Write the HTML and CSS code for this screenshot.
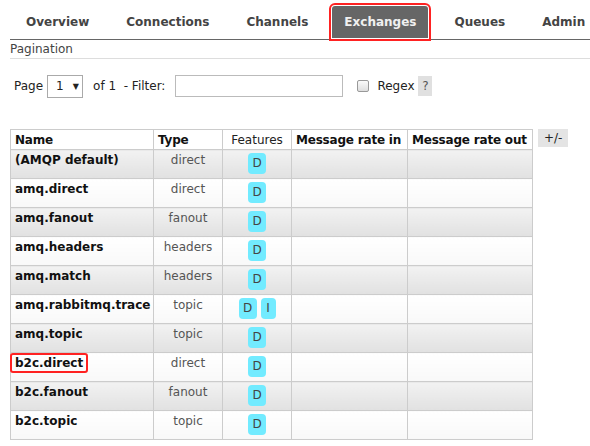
FILE: index.html
```html
<!DOCTYPE html>
<html>
<head>
<meta charset="utf-8">
<link rel="stylesheet" href="styles.css">
</head>
<body>
<div class="page">
  <ul class="tabs">
    <li class="tab">Overview</li>
    <li class="tab">Connections</li>
    <li class="tab">Channels</li>
    <li class="tab active">Exchanges</li>
    <li class="tab">Queues</li>
    <li class="tab">Admin</li>
  </ul>
  <h3 class="section">Pagination</h3>
  <div class="pager">
    <span class="lbl">Page</span>
    <span class="select"><span>1</span><span class="arrow">▼</span></span>
    <span class="lbl of">of 1&nbsp; - Filter:</span>
    <span class="input"></span>
    <span class="check"></span>
    <span class="lbl">Regex</span>
    <span class="help">?</span>
  </div>
  <div class="tablewrap">
    <table class="list">
      <colgroup>
        <col class="c-name">
        <col class="c-type">
        <col class="c-feat">
        <col class="c-in">
        <col class="c-out">
      </colgroup>
      <thead>
        <tr>
          <th>Name</th>
          <th>Type</th>
          <th class="plain">Features</th>
          <th>Message rate in</th>
          <th>Message rate out</th>
        </tr>
      </thead>
      <tbody>
        <tr class="alt1"><td class="name">(AMQP default)</td><td class="type">direct</td><td class="feat"><span class="badge">D</span></td><td></td><td></td></tr>
        <tr class="alt2"><td class="name">amq.direct</td><td class="type">direct</td><td class="feat"><span class="badge">D</span></td><td></td><td></td></tr>
        <tr class="alt1"><td class="name">amq.fanout</td><td class="type">fanout</td><td class="feat"><span class="badge">D</span></td><td></td><td></td></tr>
        <tr class="alt2"><td class="name">amq.headers</td><td class="type">headers</td><td class="feat"><span class="badge">D</span></td><td></td><td></td></tr>
        <tr class="alt1"><td class="name">amq.match</td><td class="type">headers</td><td class="feat"><span class="badge">D</span></td><td></td><td></td></tr>
        <tr class="alt2"><td class="name">amq.rabbitmq.trace</td><td class="type">topic</td><td class="feat"><span class="badge">D</span><span class="badge narrow">I</span></td><td></td><td></td></tr>
        <tr class="alt1"><td class="name">amq.topic</td><td class="type">topic</td><td class="feat"><span class="badge">D</span></td><td></td><td></td></tr>
        <tr class="alt2"><td class="name"><span class="mark">b2c.direct</span></td><td class="type">direct</td><td class="feat"><span class="badge">D</span></td><td></td><td></td></tr>
        <tr class="alt1"><td class="name">b2c.fanout</td><td class="type">fanout</td><td class="feat"><span class="badge">D</span></td><td></td><td></td></tr>
        <tr class="alt2"><td class="name">b2c.topic</td><td class="type">topic</td><td class="feat"><span class="badge">D</span></td><td></td><td></td></tr>
      </tbody>
    </table>
    <span class="toggle">+/-</span>
  </div>
</div>
</body>
</html>
```
FILE: styles.css
```css
html, body {
  margin: 0;
  padding: 0;
  background: #fff;
}
body {
  font-family: "DejaVu Sans", Verdana, sans-serif;
  font-size: 12px;
  color: #333;
  overflow: hidden;
}
.page {
  padding-left: 10px;
}
.tabs {
  list-style: none;
  margin: 0;
  padding: 6px 0 0 2px;
  display: flex;
  border-bottom: 1px solid #666;
  height: 33px;
}
.tab {
  height: 33px;
  line-height: 33px;
  padding: 0 14px;
  margin-right: 9px;
  font-weight: bold;
  color: #444;
  white-space: nowrap;
}
.tab.active {
  background: #666;
  color: #f0f0f0;
  border-radius: 3px 3px 0 0;
  height: 32px;
  line-height: 32px;
  padding: 0 12px;
  margin-left: 1px;
  margin-right: 12px;
  outline: 2px solid #f22;
  outline-offset: 1px;
}
.section {
  margin: 0;
  font-size: 12px;
  font-weight: normal;
  color: #444;
  line-height: 18px;
  height: 18px;
  border-bottom: 1px solid #ddd;
}
.pager {
  display: flex;
  align-items: center;
  height: 24px;
  margin-top: 15px;
  padding-left: 4px;
  color: #222;
}
.lbl {
  white-space: nowrap;
}
.select {
  display: flex;
  align-items: center;
  gap: 9px;
  box-sizing: border-box;
  width: 36px;
  height: 23px;
  margin-left: 4px;
  padding-left: 8px;
  border: 1px solid #aaa;
  background: #fff;
}
.arrow {
  font-size: 8px;
}
.of {
  margin-left: 10px;
}
.input {
  box-sizing: border-box;
  width: 168px;
  height: 22px;
  margin-left: 10px;
  border: 1px solid #bbb;
  background: #fff;
}
.check {
  box-sizing: border-box;
  width: 12px;
  height: 12px;
  margin-left: 14px;
  margin-right: 8px;
  border: 1px solid #999;
  border-radius: 2px;
  background: linear-gradient(#fafafa, #dedede);
}
.help {
  display: inline-block;
  width: 14px;
  height: 20px;
  line-height: 20px;
  text-align: center;
  margin-left: 4px;
  background: #e0e0e0;
  color: #555;
}
.tablewrap {
  display: flex;
  align-items: flex-start;
  gap: 5px;
  margin-top: 31px;
}
.list {
  border-collapse: collapse;
  table-layout: fixed;
  width: 522px;
  border: 1px solid #ccc;
  color: #111;
}
.c-name { width: 143px; }
.c-type { width: 69px; }
.c-feat { width: 69px; }
.c-in { width: 116px; }
.c-out { width: 125px; }
.list th {
  height: 19px;
  padding: 0 0 0 4px;
  border: 1px solid #ccc;
  text-align: left;
  font-weight: bold;
  white-space: nowrap;
  overflow: visible;
  background: #fff;
  color: #111;
  letter-spacing: -0.2px;
}
.list th.plain {
  font-weight: normal;
  color: #222;
  text-align: center;
  padding: 0;
  letter-spacing: 0;
}
.list td {
  height: 29px;
  border: 1px solid #ccc;
  padding: 0 4px;
  vertical-align: top;
  box-sizing: border-box;
}
.alt1 td {
  background: linear-gradient(#f2f2f2, #e1e1e1);
}
.alt2 td {
  background: linear-gradient(#ffffff, #f8f8f8);
}
.name {
  font-weight: bold;
  padding-top: 2px !important;
  line-height: 16px;
  white-space: nowrap;
  color: #111;
}
.type {
  text-align: center;
  color: #555;
  line-height: 16px;
  padding-top: 2px !important;
}
.feat {
  text-align: center;
  padding-top: 3px !important;
  white-space: nowrap;
}
.badge {
  display: inline-block;
  width: 18px;
  height: 21px;
  line-height: 21px;
  text-align: center;
  border-radius: 4px;
  background: #72ebff;
  color: #444;
  font-size: 12px;
}
.badge + .badge {
  margin-left: 4px;
}
.badge.narrow {
  width: 15px;
}
.mark {
  position: relative;
}
.mark::after {
  content: "";
  position: absolute;
  left: -5px;
  right: -5px;
  top: -3px;
  bottom: -3px;
  border: 2px solid #f22;
  border-radius: 3px;
}
.toggle {
  display: inline-block;
  height: 18px;
  line-height: 18px;
  padding: 0 6px;
  background: #e4e4e4;
  color: #222;
}
```
